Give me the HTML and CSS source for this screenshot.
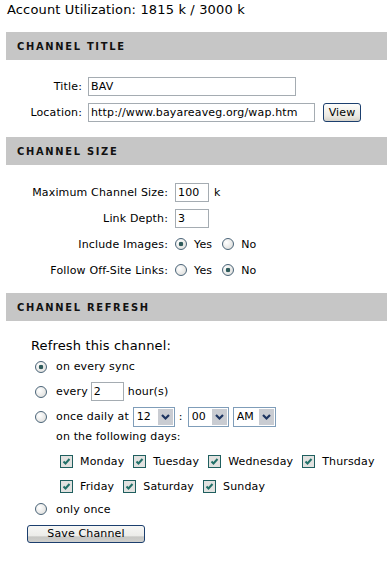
FILE: index.html
```html
<!DOCTYPE html>
<html lang="en">
<head>
    <meta charset="UTF-8">
    <title>Channel Settings</title>
    <link rel="stylesheet" href="styles.css">
</head>
<body>
    <div class="page">
        <div class="usage">Account Utilization: 1815 k / 3000 k</div>

        <h3 class="section-head">CHANNEL TITLE</h3>
        <div class="section title-section">
            <div class="row">
                <label class="lbl">Title:</label>
                <input type="text" class="txt title-input" value="BAV">
            </div>
            <div class="row">
                <label class="lbl">Location:</label>
                <input type="text" class="txt loc-input" value="http://www.bayareaveg.org/wap.htm">
                <button class="btn view-btn">View</button>
            </div>
        </div>

        <h3 class="section-head">CHANNEL SIZE</h3>
        <div class="section size-section">
            <div class="row">
                <label class="lbl">Maximum Channel Size:</label>
                <input type="text" class="txt small-input" value="100">
                <span class="unit">k</span>
            </div>
            <div class="row">
                <label class="lbl">Link Depth:</label>
                <input type="text" class="txt small-input" value="3">
            </div>
            <div class="row">
                <label class="lbl">Include Images:</label>
                <label class="opt"><input type="radio" name="images" checked> Yes</label>
                <label class="opt"><input type="radio" name="images"> No</label>
            </div>
            <div class="row">
                <label class="lbl">Follow Off-Site Links:</label>
                <label class="opt"><input type="radio" name="offsite"> Yes</label>
                <label class="opt"><input type="radio" name="offsite" checked> No</label>
            </div>
        </div>

        <h3 class="section-head">CHANNEL REFRESH</h3>
        <div class="section refresh-section">
            <div class="refresh-title">Refresh this channel:</div>
            <label class="choice"><input type="radio" name="refresh" checked> on every sync</label>
            <label class="choice"><input type="radio" name="refresh"> every <input type="text" class="txt hours-input" value="2"> hour(s)</label>
            <div class="choice">
                <input type="radio" name="refresh"> once daily at
                <select class="sel"><option>12</option></select>
                <span class="colon">:</span>
                <select class="sel"><option>00</option></select>
                <select class="sel"><option>AM</option></select>
            </div>
            <div class="days-title">on the following days:</div>
            <div class="days">
                <label class="day"><input type="checkbox" checked> Monday</label>
                <label class="day"><input type="checkbox" checked> Tuesday</label>
                <label class="day"><input type="checkbox" checked> Wednesday</label>
                <label class="day"><input type="checkbox" checked> Thursday</label>
            </div>
            <div class="days">
                <label class="day"><input type="checkbox" checked> Friday</label>
                <label class="day"><input type="checkbox" checked> Saturday</label>
                <label class="day"><input type="checkbox" checked> Sunday</label>
            </div>
            <label class="choice once"><input type="radio" name="refresh"> only once</label>
            <button class="btn save-btn">Save Channel</button>
        </div>
    </div>
</body>
</html>
```

FILE: styles.css
```css
body {
    margin: 0;
    font-family: "DejaVu Sans", Verdana, sans-serif;
    font-size: 11px;
    letter-spacing: 0.15px;
    color: #000;
    background: #fff;
}
.page {
    padding-left: 6px;
}
.usage {
    font-size: 13px;
    line-height: 16px;
    padding: 2px 0 0 1px;
    margin-bottom: 14px;
}
.section-head {
    margin: 0;
    height: 28px;
    display: flex;
    align-items: center;
    padding-left: 11px;
    background: #c6c6c6;
    font-family: "DejaVu Sans Condensed", "DejaVu Sans", sans-serif;
    font-stretch: condensed;
    font-size: 11px;
    font-weight: bold;
    letter-spacing: 1.7px;
    color: #111;
}
.section {
    display: flex;
    flex-direction: column;
}
.title-section {
    padding: 13px 0 12px;
}
.size-section {
    padding: 14px 0 10px;
}
.row {
    display: flex;
    align-items: center;
    height: 26px;
}
.lbl {
    text-align: right;
    margin-right: 6px;
}
.title-section .lbl {
    width: 76px;
}
.size-section .lbl {
    width: 162px;
    margin-right: 7px;
}
.txt {
    box-sizing: border-box;
    height: 19px;
    border: 1px solid #a5acb2;
    padding: 0 2px;
    font-family: "DejaVu Sans", Verdana, sans-serif;
    font-size: 11px;
    letter-spacing: 0.15px;
    color: #000;
    outline: none;
}
.title-input {
    width: 208px;
}
.loc-input {
    width: 227px;
}
.small-input {
    width: 34px;
}
.hours-input {
    width: 33px;
    margin: 0 4px 0 3px;
}
.unit {
    margin-left: 5px;
}
.btn {
    font-family: "DejaVu Sans", Verdana, sans-serif;
    font-size: 11px;
    letter-spacing: 0.15px;
    color: #000;
    border: 1px solid #1c3f6e;
    border-radius: 3px;
    padding: 0;
    background: linear-gradient(#fdfdfb, #ece9e2 70%, #d5d2ca);
}
.view-btn {
    width: 38px;
    height: 19px;
    margin-left: 8px;
}
.opt {
    display: flex;
    align-items: center;
    gap: 7px;
    margin-right: 10px;
}
input[type="radio"] {
    appearance: none;
    box-sizing: border-box;
    width: 12px;
    height: 12px;
    margin: 0;
    border: 1px solid #4a6478;
    border-radius: 50%;
    background: radial-gradient(circle at 35% 35%, #ffffff, #e4e4e2 70%, #cfcfcc);
}
input[type="radio"]:checked {
    background: radial-gradient(circle, #2e5a5a 0 2px, transparent 2.6px),
                radial-gradient(circle at 35% 35%, #ffffff, #e4e4e2 70%, #cfcfcc);
}
input[type="checkbox"] {
    appearance: none;
    box-sizing: border-box;
    width: 13px;
    height: 13px;
    margin: 0;
    border: 1px solid #1f5f5f;
    background-color: #e2e2e0;
    background-image: url("data:image/svg+xml,%3Csvg xmlns='http://www.w3.org/2000/svg' width='11' height='11'%3E%3Cpath d='M2.5 5.5 L4.5 7.5 L8.5 3' fill='none' stroke='%23217068' stroke-width='2'/%3E%3C/svg%3E");
    background-repeat: no-repeat;
}
.refresh-section {
    padding: 17px 0 0 29px;
}
.refresh-title {
    font-size: 13px;
    line-height: 16px;
    height: 16px;
    margin-left: -4px;
}
.choice {
    display: flex;
    align-items: center;
    height: 25px;
    white-space: nowrap;
}
.choice input[type="radio"] {
    margin-right: 9px;
}
.once {
    height: 20px;
}
.sel {
    appearance: none;
    box-sizing: border-box;
    height: 20px;
    border: 1px solid #7f9db9;
    padding: 0 0 0 3px;
    margin-left: 4px;
    font-family: "DejaVu Sans", Verdana, sans-serif;
    font-size: 11px;
    color: #000;
    background-color: #fff;
    background-image: url("data:image/svg+xml,%3Csvg xmlns='http://www.w3.org/2000/svg' width='15' height='16'%3E%3Crect width='15' height='16' fill='%23c9ccd2'/%3E%3Cpath d='M4 6 L7.5 9.5 L11 6' fill='none' stroke='%231d3461' stroke-width='2.2'/%3E%3C/svg%3E");
    background-repeat: no-repeat;
    background-position: right 1px center;
}
.sel:nth-of-type(1) {
    width: 42px;
}
.sel:nth-of-type(2) {
    width: 41px;
    margin-left: 5px;
}
.sel:nth-of-type(3) {
    width: 43px;
}
.colon {
    margin-left: 4px;
}
.days-title {
    height: 16px;
    line-height: 16px;
    margin: 0 0 4px 21px;
}
.days {
    display: flex;
    align-items: center;
    height: 25px;
    padding-left: 25px;
}
.day {
    display: flex;
    align-items: center;
    gap: 7px;
    margin-right: 9px;
}
.save-btn {
    width: 118px;
    height: 18px;
    margin: 6px 0 0 -8px;
    line-height: 14px;
    background: linear-gradient(#f7f7f5, #ebebe8 65%, #c6c6c3 66%, #d0d0cd);
}
```
